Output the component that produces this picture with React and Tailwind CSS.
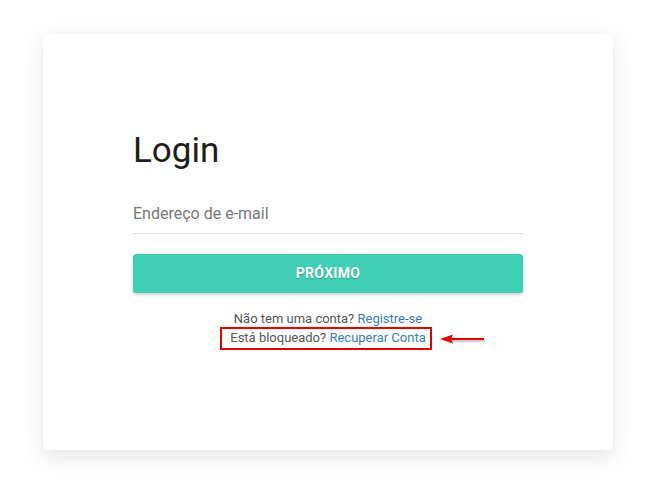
import React from 'react';

const App = () => {
    return (
        <div className="min-h-[484px] bg-white pt-[34px] font-['Roboto',_'Liberation_Sans',_sans-serif]">
            {/* Login card */}
            <div className="ml-[43px] w-[570px] h-[416px] bg-white rounded-[4px] shadow-[0_6px_22px_rgba(0,0,0,0.11)] pt-[97px]">
                <div className="w-[390px] mx-auto">
                    <h1 className="text-[35px] leading-[40px] text-[#1d1d1d] font-normal">Login</h1>

                    <input
                        type="email"
                        placeholder="Endereço de e-mail"
                        className="mt-[31px] w-full h-[32px] pb-[8px] leading-[24px] text-[16px] text-[#333] placeholder:text-[#777] border-b border-[#e0e0e0] outline-none bg-transparent"
                    />

                    <button className="mt-[20px] w-full h-[39px] rounded-[3px] bg-[#3fcfb4] text-white text-[14px] font-bold tracking-[0.3px] shadow-[0_2px_3px_rgba(0,0,0,0.18)] [text-shadow:0_1px_1px_rgba(0,0,0,0.25)]">
                        PRÓXIMO
                    </button>

                    <div className="mt-[17px] text-center text-[13px] leading-[17px] text-[#555]">
                        <div>
                            Não tem uma conta? <a href="#" className="text-[#3a7bbd]">Registre-se</a>
                        </div>
                        <div className="relative inline-block pl-[8px] pr-[4px] pb-[2px] leading-[17px] border-2 border-[#e60000] -translate-x-[2px]">
                            Está bloqueado? <a href="#" className="text-[#3a7bbd]">Recuperar Conta</a>
                            {/* annotation arrow */}
                            <svg
                                className="absolute left-[calc(100%+9px)] top-[4px]"
                                width="48"
                                height="14"
                                viewBox="0 0 48 14"
                            >
                                <line x1="13" y1="8" x2="46" y2="8" stroke="rgba(0,0,0,0.18)" strokeWidth="2.5" />
                                <line x1="12" y1="6" x2="45" y2="6" stroke="#e80000" strokeWidth="2" />
                                <polygon points="1,6 14,1.5 12,6 14,10.5" fill="#e80000" />
                            </svg>
                        </div>
                    </div>
                </div>
            </div>
        </div>
    );
};

export default App;
